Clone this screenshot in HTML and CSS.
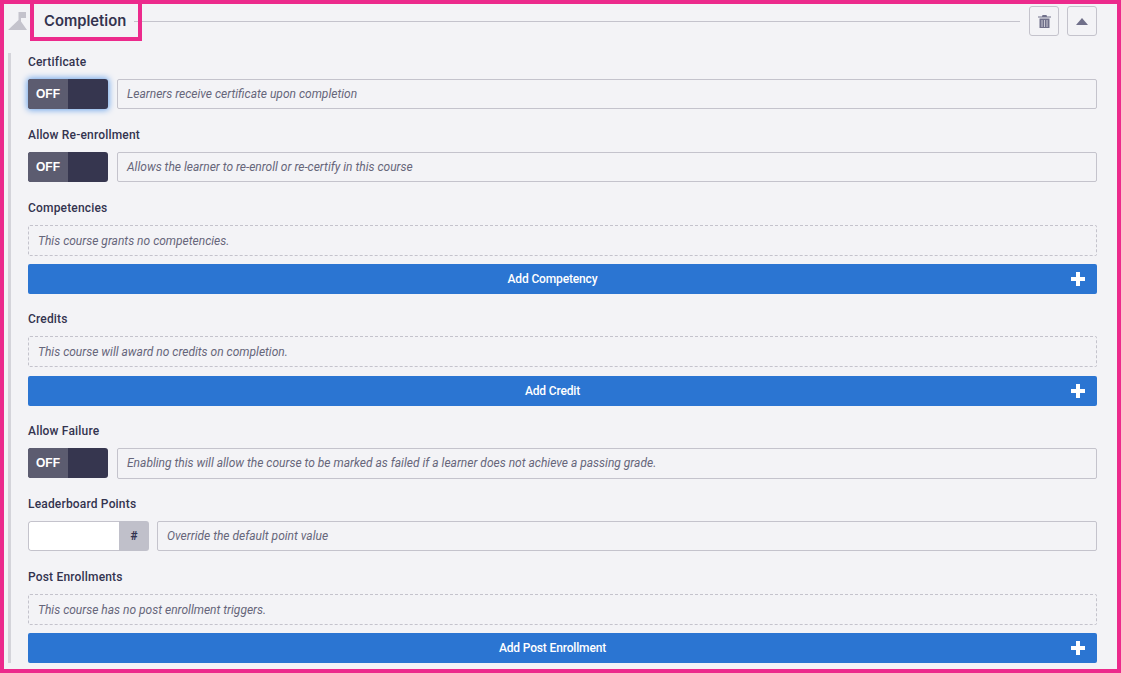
FILE: index.html
```html
<!DOCTYPE html>
<html lang="en">
<head>
<meta charset="utf-8">
<title>Completion</title>
<link rel="stylesheet" href="styles.css">
</head>
<body>
<div class="frame">
  <header class="head">
    <svg class="flag" width="20" height="20" viewBox="0 0 20 20"><path d="M10.500 2H18v6h-5v3.500l6 8.500H0l10.500-10z" fill="#c4c3cc"/></svg>
    <h2 class="title">Completion</h2>
    <div class="rule"></div>
    <button class="tool">
      <svg width="13" height="13" viewBox="0 0 13 13"><path d="M4.500 0h4l.5 1.500h4v1H0v-1h4zM1.500 3.500h10V13h-10z" fill="#70708a"/><path d="M4 5v7M6.500 5v7M9 5v7" stroke="#c9c9d4" stroke-width="1"/></svg>
    </button>
    <button class="tool">
      <svg width="12" height="7" viewBox="0 0 12 7"><path d="M6 0l6 7H0z" fill="#70708a"/></svg>
    </button>
  </header>
  <div class="body">
    <section class="field">
      <label class="label">Certificate</label>
      <div class="row">
        <div class="toggle focus"><span class="off">OFF</span><span class="rest"></span></div>
        <div class="hint">Learners receive certificate upon completion</div>
      </div>
    </section>
    <section class="field">
      <label class="label">Allow Re-enrollment</label>
      <div class="row">
        <div class="toggle"><span class="off">OFF</span><span class="rest"></span></div>
        <div class="hint">Allows the learner to re-enroll or re-certify in this course</div>
      </div>
    </section>
    <section class="field">
      <label class="label">Competencies</label>
      <div class="empty">This course grants no competencies.</div>
      <button class="add">Add Competency<svg class="plus" width="14" height="14" viewBox="0 0 14 14"><path d="M5 0h4v5h5v4H9v5H5V9H0V5h5z" fill="#fff"/></svg></button>
    </section>
    <section class="field">
      <label class="label">Credits</label>
      <div class="empty">This course will award no credits on completion.</div>
      <button class="add">Add Credit<svg class="plus" width="14" height="14" viewBox="0 0 14 14"><path d="M5 0h4v5h5v4H9v5H5V9H0V5h5z" fill="#fff"/></svg></button>
    </section>
    <section class="field">
      <label class="label">Allow Failure</label>
      <div class="row">
        <div class="toggle"><span class="off">OFF</span><span class="rest"></span></div>
        <div class="hint">Enabling this will allow the course to be marked as failed if a learner does not achieve a passing grade.</div>
      </div>
    </section>
    <section class="field">
      <label class="label">Leaderboard Points</label>
      <div class="row">
        <div class="points"><span class="points-input"></span><span class="points-unit">#</span></div>
        <div class="hint">Override the default point value</div>
      </div>
    </section>
    <section class="field">
      <label class="label">Post Enrollments</label>
      <div class="empty">This course has no post enrollment triggers.</div>
      <button class="add">Add Post Enrollment<svg class="plus" width="14" height="14" viewBox="0 0 14 14"><path d="M5 0h4v5h5v4H9v5H5V9H0V5h5z" fill="#fff"/></svg></button>
    </section>
  </div>
  <div class="callout"></div>
</div>
</body>
</html>
```
FILE: styles.css
```css
* { box-sizing: border-box; }
html, body { margin: 0; height: 673px; overflow: hidden; }
body { font-family: Roboto, "Liberation Sans", sans-serif; color: #33334f; background: #f3f3f6; }
.frame { position: relative; height: 673px; border: 4px solid #ec2a8c; overflow: hidden; }
.head { display: flex; align-items: center; height: 30px; margin-top: 2px; padding-left: 4px; padding-right: 20px; }
.flag { flex: none; margin-top: -2px; }
.title { margin: -1px 0 0 16px; font-family: Inter, sans-serif; font-size: 14.8px; font-weight: 600; white-space: nowrap; color: #33334f; }
.rule { flex: 1; height: 1px; background: #c4c3cc; margin: 0 9px 0 8px; }
.tool { display: flex; align-items: center; justify-content: center; width: 30px; height: 30px; padding: 0; margin-right: 8px; border: 1px solid #c4c3cc; border-radius: 3px; background: #f3f3f6; }
.tool:last-child { margin-right: 0; }
.body { margin: 17px 20px 0 4px; padding-left: 17px; border-left: 3px solid #d4d4da; height: 610px; }
.field { margin-bottom: 16.6px; }
.label { display: block; height: 16px; line-height: 18.6px; margin-bottom: 10px; font-size: 12px; font-weight: 500; letter-spacing: .18px; color: #33334f; }
.row { display: flex; align-items: flex-start; gap: 9px; height: 30.2px; }
.toggle { display: flex; flex: none; width: 80px; height: 30px; border-radius: 3px; overflow: hidden; background: #36364f; }
.toggle.focus { box-shadow: 0 0 6px 1px #6ba4ea; }
.off { width: 40px; line-height: 30px; text-align: center; font-family: "Liberation Sans", sans-serif; font-size: 12px; font-weight: 700; color: #fff; background: #5c5c70; }
.rest { flex: 1; }
.hint { flex: 1; height: 30.4px; line-height: 29.6px; padding-left: 9px; border: 1px solid #c4c3cc; border-radius: 2px; font-size: 12px; font-style: italic; color: #66667a; }
.empty { height: 31px; line-height: 30px; padding-left: 9px; margin-bottom: 8.2px; border: 1px dashed #c4c3cc; border-radius: 2px; font-size: 12px; font-style: italic; color: #66667a; }
.add { position: relative; display: block; width: 100%; height: 30px; padding: 0 20px 0 0; border: 0; border-radius: 2px; background: #2b75d2; color: #fff; font-family: inherit; font-size: 12px; font-weight: 500; letter-spacing: -.15px; text-align: center; }
.plus { position: absolute; right: 12px; top: 8px; }
.points { display: flex; flex: none; width: 121px; height: 30px; border-radius: 3px; overflow: hidden; }
.points-input { width: 91px; background: #fff; border: 1px solid #c4c3cc; border-right: 0; border-radius: 3px 0 0 3px; }
.points-unit { flex: 1; line-height: 30px; text-align: center; font-size: 12px; font-weight: 700; background: #c0c0ca; color: #33334f; }
.points + .hint { margin-left: -1px; }
.callout { position: absolute; left: 26px; top: -4px; width: 112px; height: 41px; border: 4px solid #ec2a8c; pointer-events: none; }
```
